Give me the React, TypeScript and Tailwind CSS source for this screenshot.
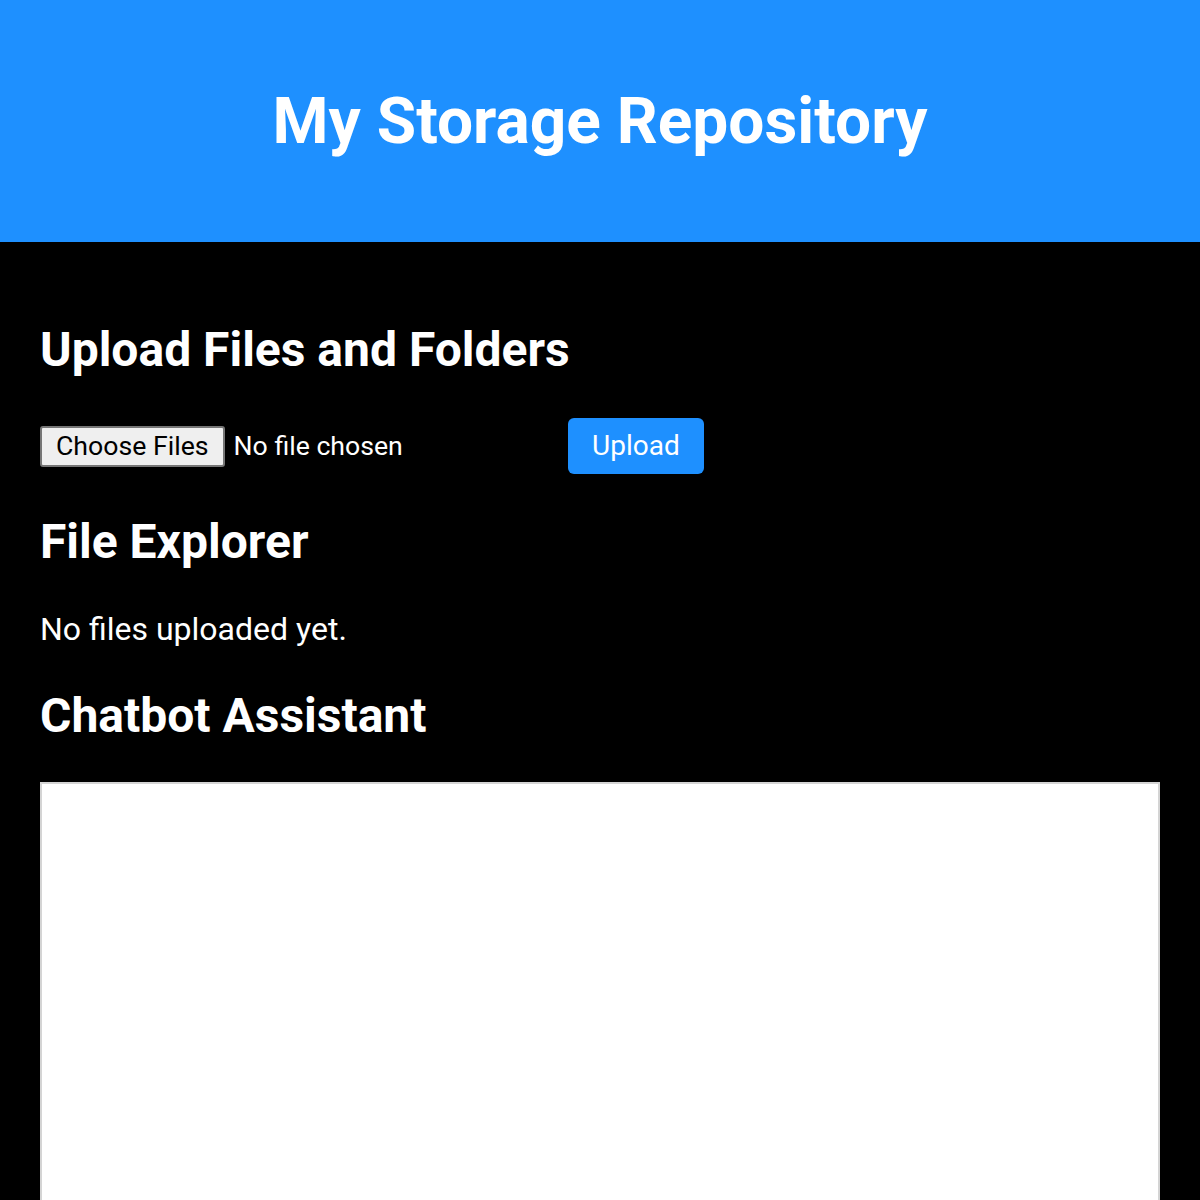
import React from "react";

function App() {
  return (
    <div className="min-h-screen bg-black font-['Roboto',sans-serif] text-white">
      <header className="flex h-[242px] items-center justify-center bg-[#1e90ff]">
        <h1 className="text-[64px] font-bold leading-[1.172]">My Storage Repository</h1>
      </header>

      <main className="px-10 pt-[80px]">
        <h2 className="text-[48px] font-bold leading-[1.172]">Upload Files and Folders</h2>

        <div className="mt-10 flex items-center">
          <label className="flex w-[528px] cursor-pointer items-center text-[26.67px] leading-[1.172]">
            <input type="file" multiple className="hidden" />
            <span className="rounded-[3px] border-2 border-[#767676] bg-[#efefef] px-[14px] py-[3px] text-black">
              Choose Files
            </span>
            <span className="ml-[9px]">No file chosen</span>
          </label>
          <button className="h-[56px] rounded-[6px] bg-[#1e90ff] px-6 text-[28px] leading-[1.172] text-white">
            Upload
          </button>
        </div>

        <h2 className="mt-10 text-[48px] font-bold leading-[1.172]">File Explorer</h2>
        <p className="mt-10 text-[32px] leading-[1.172]">No files uploaded yet.</p>

        <h2 className="mt-10 text-[48px] font-bold leading-[1.172]">Chatbot Assistant</h2>
        <div className="mt-[38px] h-[600px] border-2 border-[#d4d4d4] bg-white"></div>
      </main>
    </div>
  );
}

export default App;
